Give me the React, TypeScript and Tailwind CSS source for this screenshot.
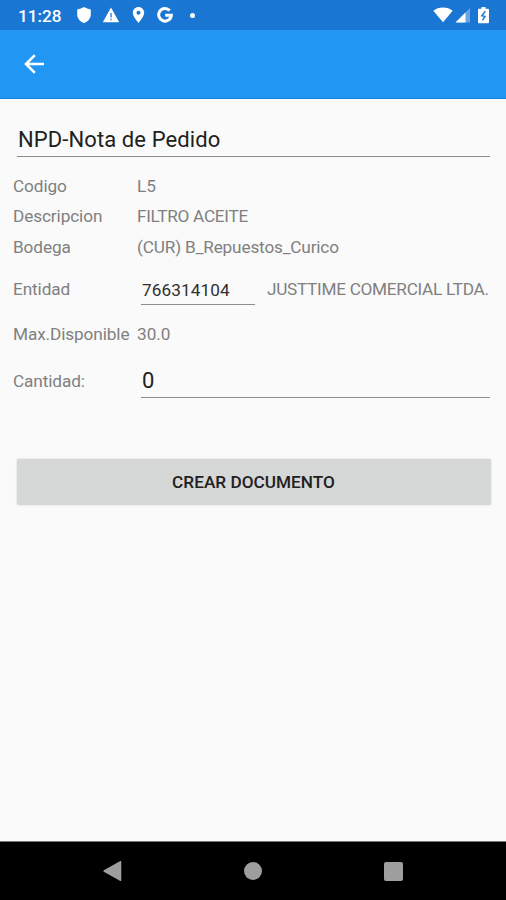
interface DetailRowProps {
    label: string;
    value: string;
    className: string;
    valueClassName?: string;
}

function StatusBar() {
    return (
        <div className="flex h-[30px] shrink-0 items-center justify-between bg-[#1976d2] pl-[18px] pr-4 text-white">
            <div className="flex items-center">
                <span className="w-[58px] whitespace-nowrap pt-px text-[17.2px] font-medium leading-[30px]">11:28</span>
                {/* Notifications */}
                <svg className="h-4 w-4" viewBox="0 0 16 16" fill="currentColor">
                    <path d="M8 0C6 1.300 3.800 2 1.200 2.400v5.100c0 4 2.900 7.200 6.800 8.500 3.900-1.300 6.800-4.500 6.800-8.500V2.400C12.200 2 10 1.300 8 0z" />
                </svg>
                <svg className="ml-[10px] h-4 w-[18px]" viewBox="0 0 18 16">
                    <path d="M9 .5.8 15.200h16.400z" fill="currentColor" />
                    <path d="M8.200 6h1.700v4.500H8.200zM8.200 11.800h1.700v1.500H8.200z" fill="#1976d2" opacity=".75" />
                </svg>
                <svg className="ml-[12px] h-4 w-[13px]" viewBox="0 0 13 16" fill="currentColor" fillRule="evenodd">
                    <path d="M6.500 0C3.300 0 .8 2.500.8 5.600.8 9.800 6.500 16 6.500 16s5.700-6.200 5.700-10.400C12.200 2.500 9.700 0 6.500 0zm0 3.700a2 2 0 1 1 0 4 2 2 0 0 1 0-4z" />
                </svg>
                <svg className="ml-[12px] h-4 w-4" viewBox="0 0 16 16" fill="none" stroke="currentColor" strokeWidth="3">
                    <path d="M12.700 3.600A6.300 6.300 0 1 0 14.300 8.300H8.200" />
                </svg>
                <span className="ml-[17px] h-[5px] w-[5px] rounded-full bg-white" />
            </div>

            {/* Wifi, signal, battery */}
            <div className="flex items-center pr-px">
                <svg className="h-4 w-5" viewBox="0 0 20 16" fill="currentColor">
                    <path d="M10 15.300.3 3.800C2.800 1.700 6.200.5 10 .5s7.200 1.200 9.700 3.300z" />
                </svg>
                <svg className="ml-[2px] h-4 w-[15px]" viewBox="0 0 15 16" fill="currentColor">
                    <path d="M15 1v14.500H.5z" opacity=".35" />
                    <path d="M10.500 5.500v10H.5z" />
                </svg>
                <svg className="ml-[8px] h-[18px] w-[11px]" viewBox="0 0 11 18">
                    <path d="M3.500 1h4v1.700H10c.5 0 1 .5 1 1v12.500c0 .5-.5 1-1 1H1c-.5 0-1-.5-1-1V3.700c0-.5.5-1 1-1h2.500z" fill="currentColor" />
                    <path d="M7.300 5.300 3.800 9.800l3.200.6-2.600 4" fill="none" stroke="#1976d2" strokeWidth="1.400" />
                </svg>
            </div>
        </div>
    );
}

function DetailRow({ label, value, className, valueClassName = '' }: DetailRowProps) {
    return (
        <div className={`flex items-center ${className}`}>
            <span className="w-[124px] shrink-0 whitespace-nowrap tracking-[-0.1px]">{label}</span>
            <span className={`whitespace-nowrap ${valueClassName}`}>{value}</span>
        </div>
    );
}

export default function App() {
    return (
        <div className="flex h-[900px] w-[506px] flex-col overflow-hidden bg-[#fafafa] font-['Roboto',sans-serif] text-[17.2px] text-[#808080]">
            <StatusBar />

            {/* Toolbar */}
            <header className="flex h-[69px] shrink-0 items-center border-b border-[#1b82dc] bg-[#2196f3] pl-[24px]">
                <button aria-label="Volver" className="text-white">
                    <svg className="h-5 w-5" viewBox="0 0 20 20" fill="none" stroke="currentColor" strokeWidth="2.600">
                        <path d="M20 10H2M10.800 1.200 2 10l8.800 8.800" />
                    </svg>
                </button>
            </header>

            <main className="flex flex-1 flex-col pl-[13px] pr-4">
                <input
                    defaultValue="NPD-Nota de Pedido"
                    aria-label="Documento"
                    className="mt-[22px] ml-1 h-9 border-b border-[#8c8c8c] bg-transparent pl-px pt-0.5 text-[22px] tracking-[0.1px] text-[#212121] outline-none"
                />

                <DetailRow label="Codigo" value="L5" className="mt-[15px] h-[30px]" />
                <DetailRow label="Descripcion" value="FILTRO ACEITE" className="h-[30px]" valueClassName="tracking-[-0.28px]" />
                <DetailRow label="Bodega" value="(CUR) B_Repuestos_Curico" className="h-[31px]" valueClassName="tracking-[-0.16px]" />

                {/* Entidad */}
                <div className="mt-[13px] flex h-[29px] items-center">
                    <span className="w-32 shrink-0 pb-px tracking-[-0.1px]">Entidad</span>
                    <input
                        defaultValue="766314104"
                        aria-label="Entidad"
                        className="h-[29px] w-[114px] shrink-0 border-b border-[#8c8c8c] bg-transparent pl-px tracking-[0.1px] text-[#303030] outline-none"
                    />
                    <span className="ml-3 whitespace-nowrap pb-px tracking-[-0.28px]">JUSTTIME COMERCIAL LTDA.</span>
                </div>

                <DetailRow label="Max.Disponible" value="30.0" className="mt-[15px] h-[30px]" />

                {/* Cantidad */}
                <div className="mt-[13px] flex h-[35px] items-center">
                    <span className="w-32 shrink-0 pt-0.5 tracking-[-0.1px]">Cantidad:</span>
                    <input
                        defaultValue="0"
                        aria-label="Cantidad"
                        className="h-[35px] min-w-0 flex-1 border-b border-[#8c8c8c] bg-transparent pl-px text-[22px] text-[#212121] outline-none"
                    />
                </div>

                <button className="mt-[61px] ml-1 -mr-px h-[46px] rounded-[2px] bg-[#d6d7d7] pr-px pt-0.5 text-[17.2px] font-medium tracking-[0.02px] text-[#212121] shadow-[0_0_2px_rgba(0,0,0,0.2)]">
                    CREAR DOCUMENTO
                </button>
            </main>

            {/* Navigation bar */}
            <nav className="flex h-[59px] shrink-0 items-center justify-between border-t border-[#777] bg-black px-[103px] text-[#9e9e9e]">
                <svg className="h-5 w-[19px]" viewBox="0 0 19 20" fill="currentColor">
                    <path d="M.8 9.300 17.300.100c.5-.3 1 0 1 .6v18.600c0 .6-.5.900-1 .6L.8 10.700c-.5-.3-.5-1.100 0-1.400z" />
                </svg>
                <span className="h-[18px] w-[18px] rounded-full bg-[#9e9e9e]" />
                <span className="h-[19px] w-[19px] rounded-[2px] bg-[#9e9e9e]" />
            </nav>
        </div>
    );
}
